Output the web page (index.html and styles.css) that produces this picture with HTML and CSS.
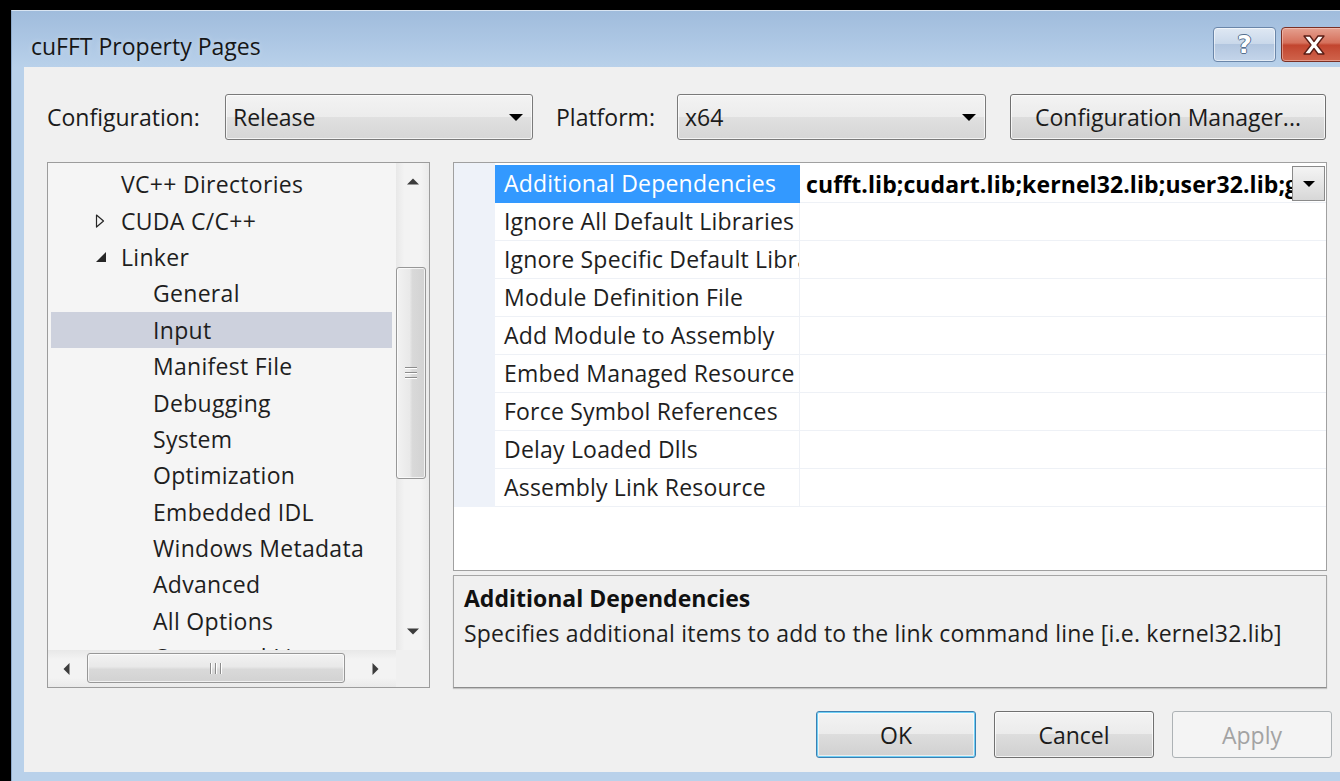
FILE: index.html
```html
<!DOCTYPE html>
<html lang="en">
<head>
<meta charset="utf-8">
<title>cuFFT Property Pages</title>
<link rel="stylesheet" href="styles.css">
</head>
<body>
<div class="window">
  <div class="titlebar">
    <span class="title">cuFFT Property Pages</span>
    <div class="caption">
      <div class="cap help"><span>?</span></div>
      <div class="cap close">
        <svg width="30" height="24" viewBox="0 0 30 24"><path d="M5 3 L11 3 L15 8.5 L19 3 L25 3 L18 12 L25 21 L19 21 L15 15.5 L11 21 L5 21 L12 12 Z" fill="#fff" stroke="#5a1d15" stroke-width="1.3" stroke-linejoin="round"/></svg>
      </div>
    </div>
  </div>

  <div class="client">
    <div class="toolbar">
      <span class="lbl lbl-config">Configuration:</span>
      <div class="combo combo-config"><span class="combo-text">Release</span><i class="arrow"></i></div>
      <span class="lbl lbl-platform">Platform:</span>
      <div class="combo combo-platform"><span class="combo-text">x64</span><i class="arrow"></i></div>
      <button class="btn btn-cfg">Configuration Manager...</button>
    </div>

    <div class="main">
      <div class="tree">
        <div class="tree-view">
          <div class="node lvl1">VC++ Directories</div>
          <div class="node lvl1 has-twisty"><svg class="twisty" width="12" height="16" viewBox="0 0 12 16"><path d="M1.5 2 L8.5 8 L1.5 14 Z" fill="none" stroke="#262626" stroke-width="1.2" stroke-linejoin="round"/></svg>CUDA C/C++</div>
          <div class="node lvl1 has-twisty"><svg class="twisty" width="12" height="16" viewBox="0 0 12 16"><path d="M11 3 L11 13 L1 13 Z" fill="#262626"/></svg>Linker</div>
          <div class="node lvl2">General</div>
          <div class="node lvl2 selected">Input</div>
          <div class="node lvl2">Manifest File</div>
          <div class="node lvl2">Debugging</div>
          <div class="node lvl2">System</div>
          <div class="node lvl2">Optimization</div>
          <div class="node lvl2">Embedded IDL</div>
          <div class="node lvl2">Windows Metadata</div>
          <div class="node lvl2">Advanced</div>
          <div class="node lvl2">All Options</div>
          <div class="node lvl2">Command Line</div>
        </div>
        <div class="vscroll">
          <div class="sb-btn vbtn"><svg width="12" height="7" viewBox="0 0 12 7"><path d="M0 6.5 L6 0.5 L12 6.5 Z" fill="#3c3c3c"/></svg></div>
          <div class="vspace"></div>
          <div class="vthumb"><i class="grip-h"></i><i class="grip-h"></i><i class="grip-h"></i></div>
          <div class="vrest"></div>
          <div class="sb-btn vbtn"><svg width="12" height="7" viewBox="0 0 12 7"><path d="M0 0.5 L12 0.5 L6 6.5 Z" fill="#3c3c3c"/></svg></div>
        </div>
        <div class="hscroll">
          <div class="sb-btn hbtn-l"><svg width="7" height="12" viewBox="0 0 7 12"><path d="M6.5 0 L6.5 12 L0.5 6 Z" fill="#3c3c3c"/></svg></div>
          <div class="hthumb"><i class="grip-v"></i><i class="grip-v"></i><i class="grip-v"></i></div>
          <div class="hrest"></div>
          <div class="sb-btn hbtn-r"><svg width="7" height="12" viewBox="0 0 7 12"><path d="M0.5 0 L6.5 6 L0.5 12 Z" fill="#3c3c3c"/></svg></div>
        </div>
        <div class="corner"></div>
      </div>

      <div class="right">
        <div class="grid">
          <div class="props">
            <div class="prow">
              <div class="pname sel">Additional Dependencies</div>
              <div class="pval"><span class="vtext">cufft.lib;cudart.lib;kernel32.lib;user32.lib;gdi32.lib;winspool.lib;comdlg32.lib</span><span class="ddbtn"><i class="arrow"></i></span></div>
            </div>
            <div class="prow"><div class="pname">Ignore All Default Libraries</div><div class="pval"></div></div>
            <div class="prow"><div class="pname">Ignore Specific Default Libraries</div><div class="pval"></div></div>
            <div class="prow"><div class="pname">Module Definition File</div><div class="pval"></div></div>
            <div class="prow"><div class="pname">Add Module to Assembly</div><div class="pval"></div></div>
            <div class="prow"><div class="pname">Embed Managed Resource File</div><div class="pval"></div></div>
            <div class="prow"><div class="pname">Force Symbol References</div><div class="pval"></div></div>
            <div class="prow"><div class="pname">Delay Loaded Dlls</div><div class="pval"></div></div>
            <div class="prow"><div class="pname">Assembly Link Resource</div><div class="pval"></div></div>
          </div>
        </div>
        <div class="desc">
          <div class="desc-title">Additional Dependencies</div>
          <div class="desc-text">Specifies additional items to add to the link command line [i.e. kernel32.lib]</div>
        </div>
      </div>
    </div>

    <div class="buttons">
      <button class="btn btn-ok">OK</button>
      <button class="btn">Cancel</button>
      <button class="btn btn-disabled">Apply</button>
    </div>
  </div>
</div>
</body>
</html>
```

FILE: styles.css
```css
* { box-sizing: border-box; }

html, body { margin: 0; padding: 0; }

body {
  width: 1340px;
  height: 781px;
  overflow: hidden;
  background: #000;
  font-family: "Open Sans", "Noto Sans", sans-serif;
  font-size: 23px;
  color: #1b1b1b;
}

/* ---------- window frame ---------- */
.window {
  margin: 10px 0 0 11px;
  width: 1362px;
  height: 771px;
  background: #b9d1ea;
  border-top: 1px solid #d9e5f2;
  border-left: 1px solid #8da9c9;
  display: flex;
  flex-direction: column;
}

.titlebar {
  height: 56px;
  flex: none;
  display: flex;
  align-items: flex-start;
  background: linear-gradient(#a0bcdc, #adc7e4 55%, #b9d1ea);
}

.title {
  margin: 20px 0 0 19px;
  line-height: 30px;
  font-size: 23px;
  color: #161616;
  text-shadow: 0 0 6px rgba(255, 255, 255, 0.35);
}

.caption {
  margin: 16px 0 0 auto;
  display: flex;
  gap: 5px;
}

.cap {
  height: 35px;
  border-radius: 4px;
  display: flex;
  align-items: center;
  justify-content: center;
}

.help {
  width: 63px;
  border: 1px solid #6a86a9;
  background: linear-gradient(#dfe8f3, #c9d8ea 48%, #b2c6df 50%, #c4d5ea);
  box-shadow: inset 0 0 0 1px rgba(255, 255, 255, 0.55);
}

.help span {
  font-family: "DejaVu Sans", sans-serif;
  font-weight: bold;
  font-size: 25px;
  line-height: 1;
  color: #fff;
  text-shadow: -1px 0 #55708f, 1px 0 #55708f, 0 -1px #55708f, 0 1px #55708f;
}

.close {
  width: 92px;
  border: 1px solid #7b3024;
  background: linear-gradient(#e5a08f, #d5705b 45%, #c2452f 52%, #d0644c);
  box-shadow: inset 0 0 0 1px rgba(255, 220, 210, 0.45);
  justify-content: flex-start;
  padding-left: 17px;
}

/* ---------- client area ---------- */
.client {
  margin-left: 12px;
  width: 1326px;
  height: 705px;
  background: #f0f0f0;
  padding: 27px 23px 0 23px;
}

.toolbar {
  height: 46px;
  display: flex;
  align-items: center;
}

.lbl { white-space: nowrap; }
.lbl-config { width: 178px; }
.lbl-platform { margin-left: 23px; width: 121px; }

.combo {
  height: 46px;
  border: 1px solid #7a7a7a;
  border-radius: 3px;
  background: linear-gradient(#f3f3f3, #ececec 50%, #e0e0e0 50%, #d6d6d6);
  box-shadow: inset 0 0 0 1px rgba(255, 255, 255, 0.7);
  display: flex;
  align-items: center;
  padding: 0 9px 0 7px;
}

.combo-config { width: 308px; }
.combo-platform { width: 309px; }

.combo-text { flex: 1; }

.arrow {
  display: block;
  width: 0;
  height: 0;
  border-left: 7px solid transparent;
  border-right: 7px solid transparent;
  border-top: 7px solid #000;
}

.btn {
  height: 46px;
  border: 1px solid #707070;
  border-radius: 3px;
  background: linear-gradient(#f3f3f3, #ebebeb 50%, #dddddd 50%, #d0d0d0);
  box-shadow: inset 0 0 0 1px rgba(255, 255, 255, 0.75);
  font-family: inherit;
  font-size: 23px;
  color: #1b1b1b;
  padding: 0;
}

.btn-cfg { margin-left: 24px; width: 316px; }

/* ---------- main area ---------- */
.main {
  margin-top: 22px;
  height: 526px;
  display: flex;
  gap: 23px;
}

.tree {
  width: 383px;
  flex: none;
  border: 1px solid #9c9c9c;
  background: #f5f5f5;
  display: grid;
  grid-template-columns: 348px 33px;
  grid-template-rows: 487px 37px;
}

.tree-view {
  overflow: hidden;
  padding-top: 3px;
}

.node {
  height: 36.4px;
  margin: 0 4px 0 3px;
  display: flex;
  align-items: center;
  white-space: nowrap;
  letter-spacing: 0.3px;
  color: #1e1e1e;
}

.lvl1 { padding-left: 70px; }
.lvl1.has-twisty { padding-left: 44px; }
.twisty { flex: none; margin-right: 14px; }
.lvl2 { padding-left: 102px; }

.node.selected { background: #cdd1dd; }

/* scrollbars */
.vscroll {
  display: flex;
  flex-direction: column;
  background: linear-gradient(90deg, #e8e8e8, #f3f3f3 25%, #f3f3f3 75%, #eaeaea);
}

.sb-btn {
  display: flex;
  align-items: center;
  justify-content: center;
  flex: none;
}

.vbtn { height: 37px; }
.vspace { height: 67px; flex: none; }
.vrest { flex: 1; }

.vthumb {
  height: 212px;
  flex: none;
  margin-right: 3px;
  border: 1px solid #979797;
  border-radius: 3px;
  background: linear-gradient(90deg, #f2f2f2, #e9e9e9 45%, #d9d9d9 55%, #d2d2d2);
  box-shadow: inset 0 0 0 1px rgba(255, 255, 255, 0.7);
  display: flex;
  flex-direction: column;
  align-items: center;
  justify-content: center;
  gap: 3px;
}

.grip-h { display: block; width: 12px; height: 1px; background: #8c8c8c; border-bottom: 1px solid #fff; box-sizing: content-box; }

.hscroll {
  display: flex;
  width: 348px;
  background: linear-gradient(#e8e8e8, #f3f3f3 25%, #f3f3f3 75%, #eaeaea);
}

.hbtn-l { width: 36px; margin-right: 3px; }
.hrest { flex: 1 1 auto; }
.hbtn-r { width: 42px; }

.hthumb {
  width: 258px;
  flex: none;
  margin: 3px 0 4px 0;
  border: 1px solid #979797;
  border-radius: 3px;
  background: linear-gradient(#f2f2f2, #e9e9e9 45%, #d9d9d9 55%, #d2d2d2);
  box-shadow: inset 0 0 0 1px rgba(255, 255, 255, 0.7);
  display: flex;
  align-items: center;
  justify-content: center;
  gap: 3px;
}

.grip-v { display: block; width: 1px; height: 11px; background: #8c8c8c; border-right: 1px solid #fff; box-sizing: content-box; }

.corner { background: #f0f0f0; }

/* ---------- property grid ---------- */
.right {
  width: 874px;
  flex: none;
  display: flex;
  flex-direction: column;
  gap: 4px;
}

.grid {
  height: 409px;
  border: 1px solid #a0a0a0;
  background: #fff;
}

.props {
  padding-top: 2px;
  background: linear-gradient(90deg, #eef2f9 0 41px, #ffffff 41px);
}

.prow {
  height: 38px;
  display: flex;
  padding-left: 41px;
}

.pname {
  width: 305px;
  flex: none;
  padding-left: 9px;
  line-height: 37px;
  white-space: nowrap;
  overflow: hidden;
  letter-spacing: 0.2px;
  border-bottom: 1px solid #eef1f6;
  border-right: 1px solid #eef1f6;
  color: #1e1e1e;
}

.pname.sel {
  background: #3399ff;
  color: #fff;
  border-color: #3399ff;
}

.pval {
  flex: 1;
  min-width: 0;
  display: flex;
  align-items: center;
  border-bottom: 1px solid #eef1f6;
}

.vtext {
  flex: 1;
  min-width: 0;
  overflow: hidden;
  white-space: nowrap;
  padding-left: 6px;
  font-weight: bold;
  letter-spacing: 0.1px;
  color: #000;
}

.ddbtn {
  width: 33px;
  height: 35px;
  margin: 0 1px 0 0;
  border: 1px solid #8a8a8a;
  background: linear-gradient(#f4f4f4, #e6e6e6 50%, #d7d7d7);
  display: flex;
  align-items: center;
  justify-content: center;
}

.ddbtn .arrow { border-left-width: 6px; border-right-width: 6px; border-top-width: 6px; }

/* ---------- description ---------- */
.desc {
  height: 113px;
  border: 1px solid #a6a6a6;
  border-bottom-color: #8c8c8c;
  box-shadow: 0 1px 1px rgba(0, 0, 0, 0.18);
  background: #f0f0f0;
  padding: 6px 10px 0;
}

.desc-title {
  font-weight: bold;
  line-height: 32px;
  font-size: 23px;
  color: #111;
}

.desc-text {
  margin-top: 3px;
  line-height: 32px;
  font-size: 23px;
  letter-spacing: 0.2px;
  color: #1e1e1e;
  white-space: nowrap;
}

/* ---------- dialog buttons ---------- */
.buttons {
  margin: 23px -5px 0 0;
  display: flex;
  justify-content: flex-end;
  gap: 18px;
}

.buttons .btn { width: 160px; height: 47px; }

.btn-ok {
  border-color: #3c7fb1;
  box-shadow: inset 0 0 0 1px #6fd0f6, inset 0 0 0 2px rgba(255, 255, 255, 0.6);
}

.btn-disabled {
  border-color: #adb2b5;
  background: #f4f4f4;
  box-shadow: none;
  color: #a3a3a3;
}
```
